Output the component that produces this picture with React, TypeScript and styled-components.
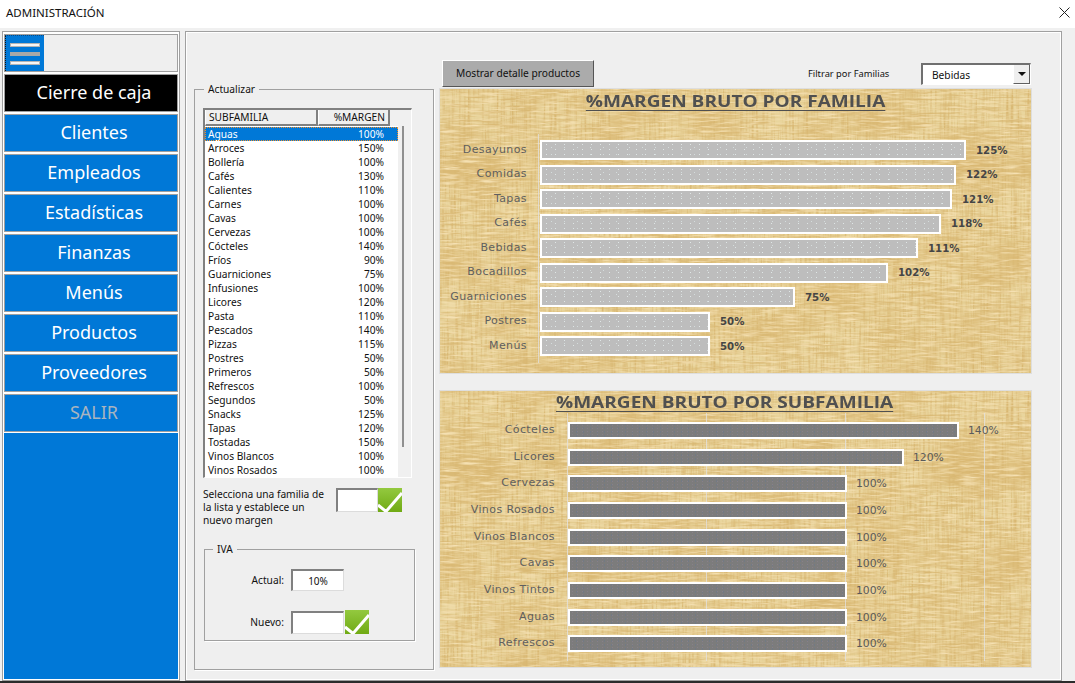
import React from "react";
import styled, { createGlobalStyle } from "styled-components";

const Global = createGlobalStyle`
  html, body { margin: 0; padding: 0; background: #f0f0f0; }
  * { box-sizing: border-box; }
  #root { width: 1075px; height: 683px; overflow: hidden; }
`;

const Window = styled.div`
  width: 1075px;
  height: 683px;
  display: flex;
  flex-direction: column;
  background: #f0f0f0;
  border-bottom: 2px solid #2b2b2b;
  font-family: "Noto Sans", "Liberation Sans", sans-serif;
  color: #111;
`;
const TitleBar = styled.header`
  height: 28px;
  flex: none;
  background: #fff;
  display: flex;
  align-items: center;
  justify-content: space-between;
  padding: 0 5px 3px 6px;
  font-size: 11.5px;
`;
const Body = styled.div`
  flex: 1;
  display: flex;
  padding: 3px 13px 0 2px;
  gap: 5px;
  min-height: 0;
`;
const Sidebar = styled.nav`
  width: 178px;
  flex: none;
  height: 650px;
  background: #0078d7;
  border: 1px solid #a0a0a0;
  box-shadow: inset 0 0 0 1px #fff;
  display: flex;
  flex-direction: column;
  padding: 2px 1px 0;
  gap: 2px;
`;
const MenuToggleRow = styled.div`
  height: 38px;
  flex: none;
  background: #efefef;
  border: 1px solid #a0a0a0;
  box-shadow: 0 0 0 1px #fff;
  display: flex;
`;
const Hamburger = styled.div`
  width: 39px;
  background: #0078d7;
  border-left: 1px dotted #111;
  border-top: 1px dotted #0a4a85;
  display: flex;
  flex-direction: column;
  justify-content: center;
  align-items: center;
  gap: 5px;
`;
const HamburgerLine = styled.span<{ $mid?: boolean }>`
  width: 30px;
  height: 4px;
  background: ${p => (p.$mid ? "#a8a8a8" : "#f6f6f6")};
  border: 1px solid ${p => (p.$mid ? "#a8a8a8" : "#b4b4b4")};
`;
const NavButton = styled.button<{ $active?: boolean; $dim?: boolean }>`
  height: 38px;
  flex: none;
  border: 1px solid #a0a0a0;
  outline: 1px solid #fff;
  background: ${p => (p.$active ? "#000" : "#0078d7")};
  color: ${p => (p.$dim ? "#a9b4bf" : "#fff")};
  font-family: "Noto Sans", sans-serif;
  font-size: 18px;
  padding: 0 0 2px 6px;
`;
const Main = styled.main`
  width: 878px;
  height: 650px;
  background: #efefef;
  border: 1px solid #a0a0a0;
  box-shadow: inset 0 0 0 1px #fff;
  display: flex;
  gap: 5px;
  padding: 0 0 0 8px;
`;
const Group = styled.fieldset`
  margin: 0;
  padding: 0;
  min-width: 0;
  border: 1px solid #a0a0a0;
  box-shadow: 1px 1px 0 #fff;
  font-size: 10.2px;
`;
const UpdateGroup = styled(Group)`
  width: 240px;
  height: 588px;
  margin-top: 50px;
  padding: 12px 0 0 8px;
  display: flex;
  flex-direction: column;
`;
const Legend = styled.legend<{ $left: number }>`
  margin-left: ${p => p.$left}px;
  padding: 0 4px;
  font-size: 10.2px;
`;
const ListBox = styled.div`
  width: 209px;
  height: 370px;
  flex: none;
  background: #f0f0f0;
  border-top: 2px solid #808080;
  border-left: 2px solid #808080;
  border-right: 1px solid #fff;
  border-bottom: 1px solid #fff;
  position: relative;
  display: flex;
  flex-direction: column;
`;
const ListHead = styled.div`
  display: grid;
  grid-template-columns: 113px 72px;
  height: 16px;
  flex: none;
`;
const HeadCell = styled.div<{ $right?: boolean }>`
  background: #efefef;
  border-right: 2px solid #808080;
  border-bottom: 2px solid #808080;
  border-left: 1px solid #fff;
  font-size: 10.2px;
  line-height: 14px;
  padding: 0 ${p => (p.$right ? "3px" : "0")} 0 3px;
  text-align: ${p => (p.$right ? "right" : "left")};
`;
const ListRows = styled.div`
  width: 193px;
  flex: 1;
  background: #fff;
  padding-top: 1px;
  overflow: hidden;
`;
const ListRow = styled.div<{ $selected?: boolean }>`
  display: flex;
  justify-content: space-between;
  height: 14px;
  padding: 0 14px 0 3px;
  font-size: 10.2px;
  line-height: 14px;
  background: ${p => (p.$selected ? "#0078d7" : "transparent")};
  color: ${p => (p.$selected ? "#fff" : "#111")};
  outline: ${p => (p.$selected ? "1px dotted #f0902c" : "none")};
  outline-offset: -1px;
`;
const ScrollThumb = styled.div`
  position: absolute;
  left: 197px;
  top: 16px;
  width: 2px;
  height: 321px;
  background: #8f8f8f;
`;
const MarginForm = styled.div`
  display: flex;
  align-items: flex-start;
  margin-top: 10px;
  height: 52px;
`;
const Hint = styled.p`
  width: 124px;
  margin: 0 9px 0 0;
  font-size: 10.2px;
  line-height: 13px;
`;
const Input = styled.div<{ $w: number; $h: number }>`
  width: ${p => p.$w}px;
  height: ${p => p.$h}px;
  flex: none;
  background: #fff;
  border-top: 2px solid #808080;
  border-left: 2px solid #808080;
  border-right: 1px solid #dcdcdc;
  border-bottom: 1px solid #dcdcdc;
  font-size: 10px;
  display: flex;
  align-items: center;
  justify-content: center;
`;
const CheckBox = styled.svg`
  width: 24px;
  height: 24px;
  flex: none;
  display: block;
`;
const IvaGroup = styled(Group)`
  width: 211px;
  height: 99px;
  margin: 2px 0 0 1px;
  padding: 12px 0 0 0;
  display: flex;
  flex-direction: column;
  gap: 18px;
`;
const IvaRow = styled.div`
  display: flex;
  align-items: center;
  gap: 1px;
  height: 24px;
`;
const IvaLabel = styled.label`
  width: 79px;
  text-align: right;
  margin-right: 6px;
  font-size: 10.2px;
`;
const RightCol = styled.div`
  width: 593px;
  display: flex;
  flex-direction: column;
`;
const Toolbar = styled.div`
  height: 56px;
  flex: none;
  display: flex;
  align-items: flex-end;
  padding-left: 3px;
`;
const DetailButton = styled.button`
  width: 152px;
  height: 27px;
  margin-bottom: 1px;
  background: #ababab;
  border: 1px solid;
  border-color: #fff #555 #555 #fff;
  font-family: "Noto Sans", sans-serif;
  font-size: 10.2px;
  color: #111;
  padding: 0 0 1px;
`;
const FilterLabel = styled.span`
  margin-left: 214px;
  width: 113px;
  font-size: 9.3px;
  align-self: flex-end;
  padding-bottom: 8px;
`;
const Select = styled.div`
  width: 110px;
  height: 22px;
  margin-bottom: 3px;
  background: #fff;
  border-top: 2px solid #707070;
  border-left: 2px solid #707070;
  border-right: 1px solid #fff;
  border-bottom: 1px solid #fff;
  display: flex;
  align-items: center;
  justify-content: space-between;
  padding-left: 9px;
  font-size: 10.2px;
`;
const SelectArrow = styled.span`
  width: 17px;
  height: 19px;
  background: #efefef;
  border-right: 1px solid #606060;
  border-bottom: 1px solid #606060;
  border-left: 1px solid #fff;
  display: flex;
  align-items: center;
  justify-content: center;
  &::after {
    content: "";
    border-left: 4px solid transparent;
    border-right: 4px solid transparent;
    border-top: 4px solid #111;
  }
`;
const ChartPanel = styled.section<{ $h: number; $mt?: number }>`
  position: relative;
  height: ${p => p.$h}px;
  margin-top: ${p => p.$mt ?? 0}px;
  background: #e9d59d;
  overflow: hidden;
  outline: 1px solid #dedede;
  outline-offset: -1px;
`;
const Texture = styled.svg`
  position: absolute;
  inset: 1px;
  width: calc(100% - 2px);
  height: calc(100% - 2px);
`;
const ChartContent = styled.div`
  position: relative;
  display: flex;
  flex-direction: column;
`;
const ChartTitle = styled.h2<{ $top: number; $shift?: number }>`
  margin: ${p => p.$top}px 0 0;
  height: 21px;
  text-align: center;
  padding-right: ${p => p.$shift ?? 0}px;
  font-family: "Open Sans", sans-serif;
  font-size: 16.5px;
  line-height: 21px;
  font-weight: 700;
  color: #505050;
  text-decoration: underline;
  text-decoration-thickness: 1px;
  text-underline-offset: 3px;
  transform: scaleX(1.155);
  transform-origin: ${p => (p.$shift ? 285 : 296)}px 0;
`;
const Rows = styled.div<{ $top: number }>`
  position: relative;
  margin-top: ${p => p.$top}px;
  display: flex;
  flex-direction: column;
`;
const AxisLine = styled.span<{ $left: number }>`
  position: absolute;
  left: ${p => p.$left}px;
  top: -4px;
  bottom: -4px;
  width: 1px;
  background: rgba(225, 225, 225, 0.75);
`;
const ChartRow = styled.div<{ $pitch: number }>`
  position: relative;
  height: ${p => p.$pitch}px;
  display: flex;
  align-items: center;
`;
const RowLabel = styled.span<{ $w: number }>`
  width: ${p => p.$w}px;
  flex: none;
  text-align: right;
  font-family: "DejaVu Sans", sans-serif;
  font-size: 11px;
  letter-spacing: 0.4px;
  color: #5f5f5f;
  padding-right: 13px;
  padding-bottom: 2px;
`;
const Bar = styled.div<{ $dark?: boolean }>`
  height: ${p => (p.$dark ? 17 : 20)}px;
  border: 2px solid #fff;
  flex: none;
  background-color: ${p => (p.$dark ? "#7c7c7c" : "#bdbdbd")};
  background-image: ${p =>
    p.$dark
      ? "radial-gradient(circle, #88808a 0.6px, transparent 0.8px), radial-gradient(circle, #727a84 0.6px, transparent 0.8px)"
      : "radial-gradient(circle, #dfe6e6 0.5px, transparent 0.7px), radial-gradient(circle, #d4dcdc 0.5px, transparent 0.7px)"};
  background-size: ${p => (p.$dark ? "5px 3px, 7px 4px" : "9px 5px, 13px 7px")};
  background-position: 0 0, 3px 2px;
`;
const Value = styled.span<{ $bold?: boolean; $gap: number }>`
  margin-left: ${p => p.$gap}px;
  font-family: "DejaVu Sans", sans-serif;
  font-size: ${p => (p.$bold ? 10.2 : 10.8)}px;
  font-weight: ${p => (p.$bold ? 700 : 400)};
  color: ${p => (p.$bold ? "#454545" : "#5a5a5a")};
`;

const items: [string, string][] = [
  ["Aguas", "100%"], ["Arroces", "150%"], ["Bollería", "100%"], ["Cafés", "130%"],
  ["Calientes", "110%"], ["Carnes", "100%"], ["Cavas", "100%"], ["Cervezas", "100%"],
  ["Cócteles", "140%"], ["Fríos", "90%"], ["Guarniciones", "75%"], ["Infusiones", "100%"],
  ["Licores", "120%"], ["Pasta", "110%"], ["Pescados", "140%"], ["Pizzas", "115%"],
  ["Postres", "50%"], ["Primeros", "50%"], ["Refrescos", "100%"], ["Segundos", "50%"],
  ["Snacks", "125%"], ["Tapas", "120%"], ["Tostadas", "150%"], ["Vinos Blancos", "100%"],
  ["Vinos Rosados", "100%"],
];
const nav = ["Clientes", "Empleados", "Estadísticas", "Finanzas", "Menús", "Productos", "Proveedores"];
const fam: [string, number, string][] = [
  ["Desayunos", 426, "125%"], ["Comidas", 416, "122%"], ["Tapas", 412, "121%"], ["Cafés", 401, "118%"],
  ["Bebidas", 378, "111%"], ["Bocadillos", 348, "102%"], ["Guarniciones", 255, "75%"],
  ["Postres", 170, "50%"], ["Menús", 170, "50%"],
];
const sub: [string, number, string][] = [
  ["Cócteles", 391, "140%"], ["Licores", 336, "120%"], ["Cervezas", 279, "100%"],
  ["Vinos Rosados", 279, "100%"], ["Vinos Blancos", 279, "100%"], ["Cavas", 279, "100%"],
  ["Vinos Tintos", 279, "100%"], ["Aguas", 279, "100%"], ["Refrescos", 279, "100%"],
];

const Check = ({ id }: { id: string }) => (
  <CheckBox viewBox="0 0 24 24">
    <defs>
      <linearGradient id={id} x1="0" y1="0" x2="0" y2="1">
        <stop offset="0" stopColor="#93c93f" />
        <stop offset="1" stopColor="#70aa14" />
      </linearGradient>
    </defs>
    <rect width="24" height="24" fill={`url(#${id})`} />
    <path d="M0 17 L8 23.5 L24 5" fill="none" stroke="#fff" strokeWidth="3" />
  </CheckBox>
);

const layers: { key: string; freq: string; seed: number; rgb: string; k: number; o: number }[] = [
  { key: "b", freq: "0.014 0.02", seed: 2, rgb: "0.86 0.73 0.46", k: 2.2, o: -0.85 },
  { key: "h", freq: "0.03 0.42", seed: 4, rgb: "0.85 0.72 0.45", k: 2.4, o: -1.0 },
  { key: "v", freq: "0.42 0.02", seed: 9, rgb: "0.85 0.72 0.45", k: 2.4, o: -1.0 },
  { key: "l", freq: "0.05 0.5", seed: 21, rgb: "0.96 0.88 0.70", k: 2.4, o: -1.05 },
];

const Papyrus = ({ id }: { id: string }) => {
  return (
    <Texture aria-hidden="true">
      {layers.map(l => {
        const [r, g, b] = l.rgb.split(" ");
        return (
          <filter key={l.key} id={`${id}${l.key}`} x="0" y="0" width="100%" height="100%" colorInterpolationFilters="sRGB">
            <feTurbulence type="fractalNoise" baseFrequency={l.freq} numOctaves="3" seed={l.seed} />
            <feColorMatrix values={`0 0 0 0 ${r}  0 0 0 0 ${g}  0 0 0 0 ${b}  ${l.k} 0 0 0 ${l.o}`} />
          </filter>
        );
      })}
      {layers.map(l => (
        <rect key={l.key} width="100%" height="100%" filter={`url(#${id}${l.key})`} />
      ))}
    </Texture>
  );
};

export default function App() {
  return (
    <Window>
      <Global />
      <TitleBar>
        <span>ADMINISTRACIÓN</span>
        <svg width="11" height="11" viewBox="0 0 11 11">
          <path d="M0.5 0.5 L10.5 10.5 M10.5 0.5 L0.5 10.5" stroke="#222" strokeWidth="1" fill="none" />
        </svg>
      </TitleBar>
      <Body>
        <Sidebar>
          <MenuToggleRow>
            <Hamburger>
              <HamburgerLine />
              <HamburgerLine $mid />
              <HamburgerLine />
            </Hamburger>
          </MenuToggleRow>
          <NavButton $active>Cierre de caja</NavButton>
          {nav.map(n => (
            <NavButton key={n}>{n}</NavButton>
          ))}
          <NavButton $dim>SALIR</NavButton>
        </Sidebar>
        <Main>
          <UpdateGroup>
            <Legend $left={1}>Actualizar</Legend>
            <ListBox>
              <ListHead>
                <HeadCell>SUBFAMILIA</HeadCell>
                <HeadCell $right>%MARGEN</HeadCell>
              </ListHead>
              <ListRows>
                {items.map(([n, v], i) => (
                  <ListRow key={n} $selected={i === 0}>
                    <span>{n}</span>
                    <span>{v}</span>
                  </ListRow>
                ))}
              </ListRows>
              <ScrollThumb />
            </ListBox>
            <MarginForm>
              <Hint>Selecciona una familia de la lista y establece un nuevo margen</Hint>
              <Input $w={42} $h={24} />
              <Check id="c1" />
            </MarginForm>
            <IvaGroup>
              <Legend $left={8}>IVA</Legend>
              <IvaRow>
                <IvaLabel>Actual:</IvaLabel>
                <Input $w={53} $h={22}>10%</Input>
              </IvaRow>
              <IvaRow>
                <IvaLabel>Nuevo:</IvaLabel>
                <Input $w={53} $h={23} />
                <Check id="c2" />
              </IvaRow>
            </IvaGroup>
          </UpdateGroup>
          <RightCol>
            <Toolbar>
              <DetailButton>Mostrar detalle productos</DetailButton>
              <FilterLabel>Filtrar por Familias</FilterLabel>
              <Select>
                <span>Bebidas</span>
                <SelectArrow />
              </Select>
            </Toolbar>
            <ChartPanel $h={286}>
              <Papyrus id="p1" />
              <ChartContent>
                <ChartTitle $top={2}>%MARGEN BRUTO POR FAMILIA</ChartTitle>
                <Rows $top={27}>
                  <AxisLine $left={99} />
                  {fam.map(([n, w, v]) => (
                    <ChartRow key={n} $pitch={24.5}>
                      <RowLabel $w={101}>{n}</RowLabel>
                      <Bar style={{ width: w }} />
                      <Value $bold $gap={10}>{v}</Value>
                    </ChartRow>
                  ))}
                </Rows>
              </ChartContent>
            </ChartPanel>
            <ChartPanel $h={278} $mt={16}>
              <Papyrus id="p2" />
              <ChartContent>
                <ChartTitle $top={1} $shift={22}>%MARGEN BRUTO POR SUBFAMILIA</ChartTitle>
                <Rows $top={5}>
                  <AxisLine $left={128} />
                  <AxisLine $left={267} />
                  <AxisLine $left={406} />
                  <AxisLine $left={545} />
                  {sub.map(([n, w, v]) => (
                    <ChartRow key={n} $pitch={26.7}>
                      <RowLabel $w={129}>{n}</RowLabel>
                      <Bar $dark style={{ width: w }} />
                      <Value $gap={9}>{v}</Value>
                    </ChartRow>
                  ))}
                </Rows>
              </ChartContent>
            </ChartPanel>
          </RightCol>
        </Main>
      </Body>
    </Window>
  );
}
